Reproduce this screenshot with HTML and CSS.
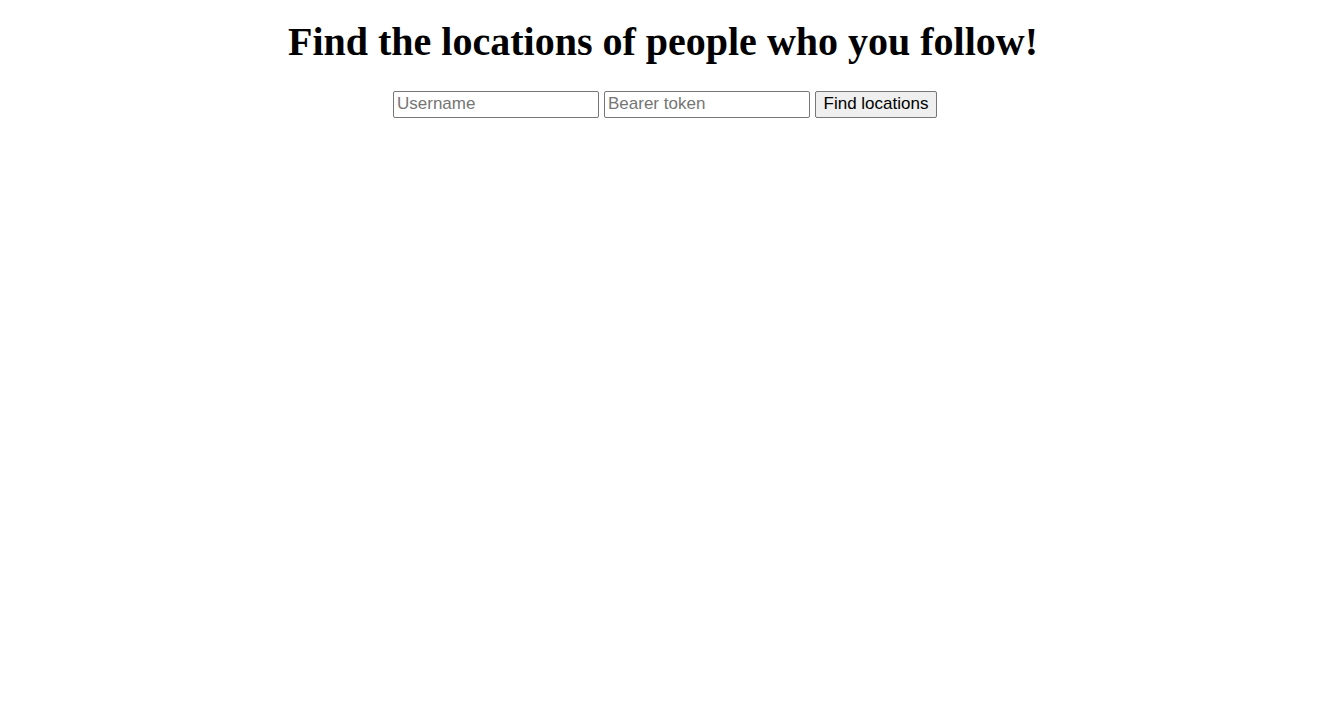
FILE: index.html
```html
<!DOCTYPE html>
<html>
<head>
<meta charset="utf-8">
<link rel="stylesheet" href="styles.css">
</head>
<body class="page">
<h1 class="title">Find the locations of people who you follow!</h1>
<form class="search">
<input class="field" type="text" placeholder="Username">
<input class="field" type="text" placeholder="Bearer token">
<button class="submit" type="button">Find locations</button>
</form>
</body>
</html>
```
FILE: styles.css
```css
.page {
  margin: 8px;
  font-family: "Liberation Serif", serif;
  text-align: center;
}
.title {
  font-size: 40px;
  line-height: 46px;
  font-weight: bold;
  margin: 11px 0 26px;
}
.search {
  display: flex;
  justify-content: center;
  gap: 5px;
  padding-left: 4px;
}
.field {
  font-family: "Liberation Sans", Arial, sans-serif;
  font-size: 17px;
  width: 206px;
  height: 27px;
  box-sizing: border-box;
  padding: 0 3px 2px;
  border: 1px solid #767676;
  border-radius: 2px;
  margin: 0;
}
.field::placeholder {
  color: #757575;
}
.submit {
  font-family: "Liberation Sans", Arial, sans-serif;
  font-size: 17px;
  width: 122px;
  height: 27px;
  box-sizing: border-box;
  padding: 0 4px 2px;
  border: 1px solid #767676;
  border-radius: 2px;
  background: #efefef;
  color: #000;
  margin: 0;
}
```
